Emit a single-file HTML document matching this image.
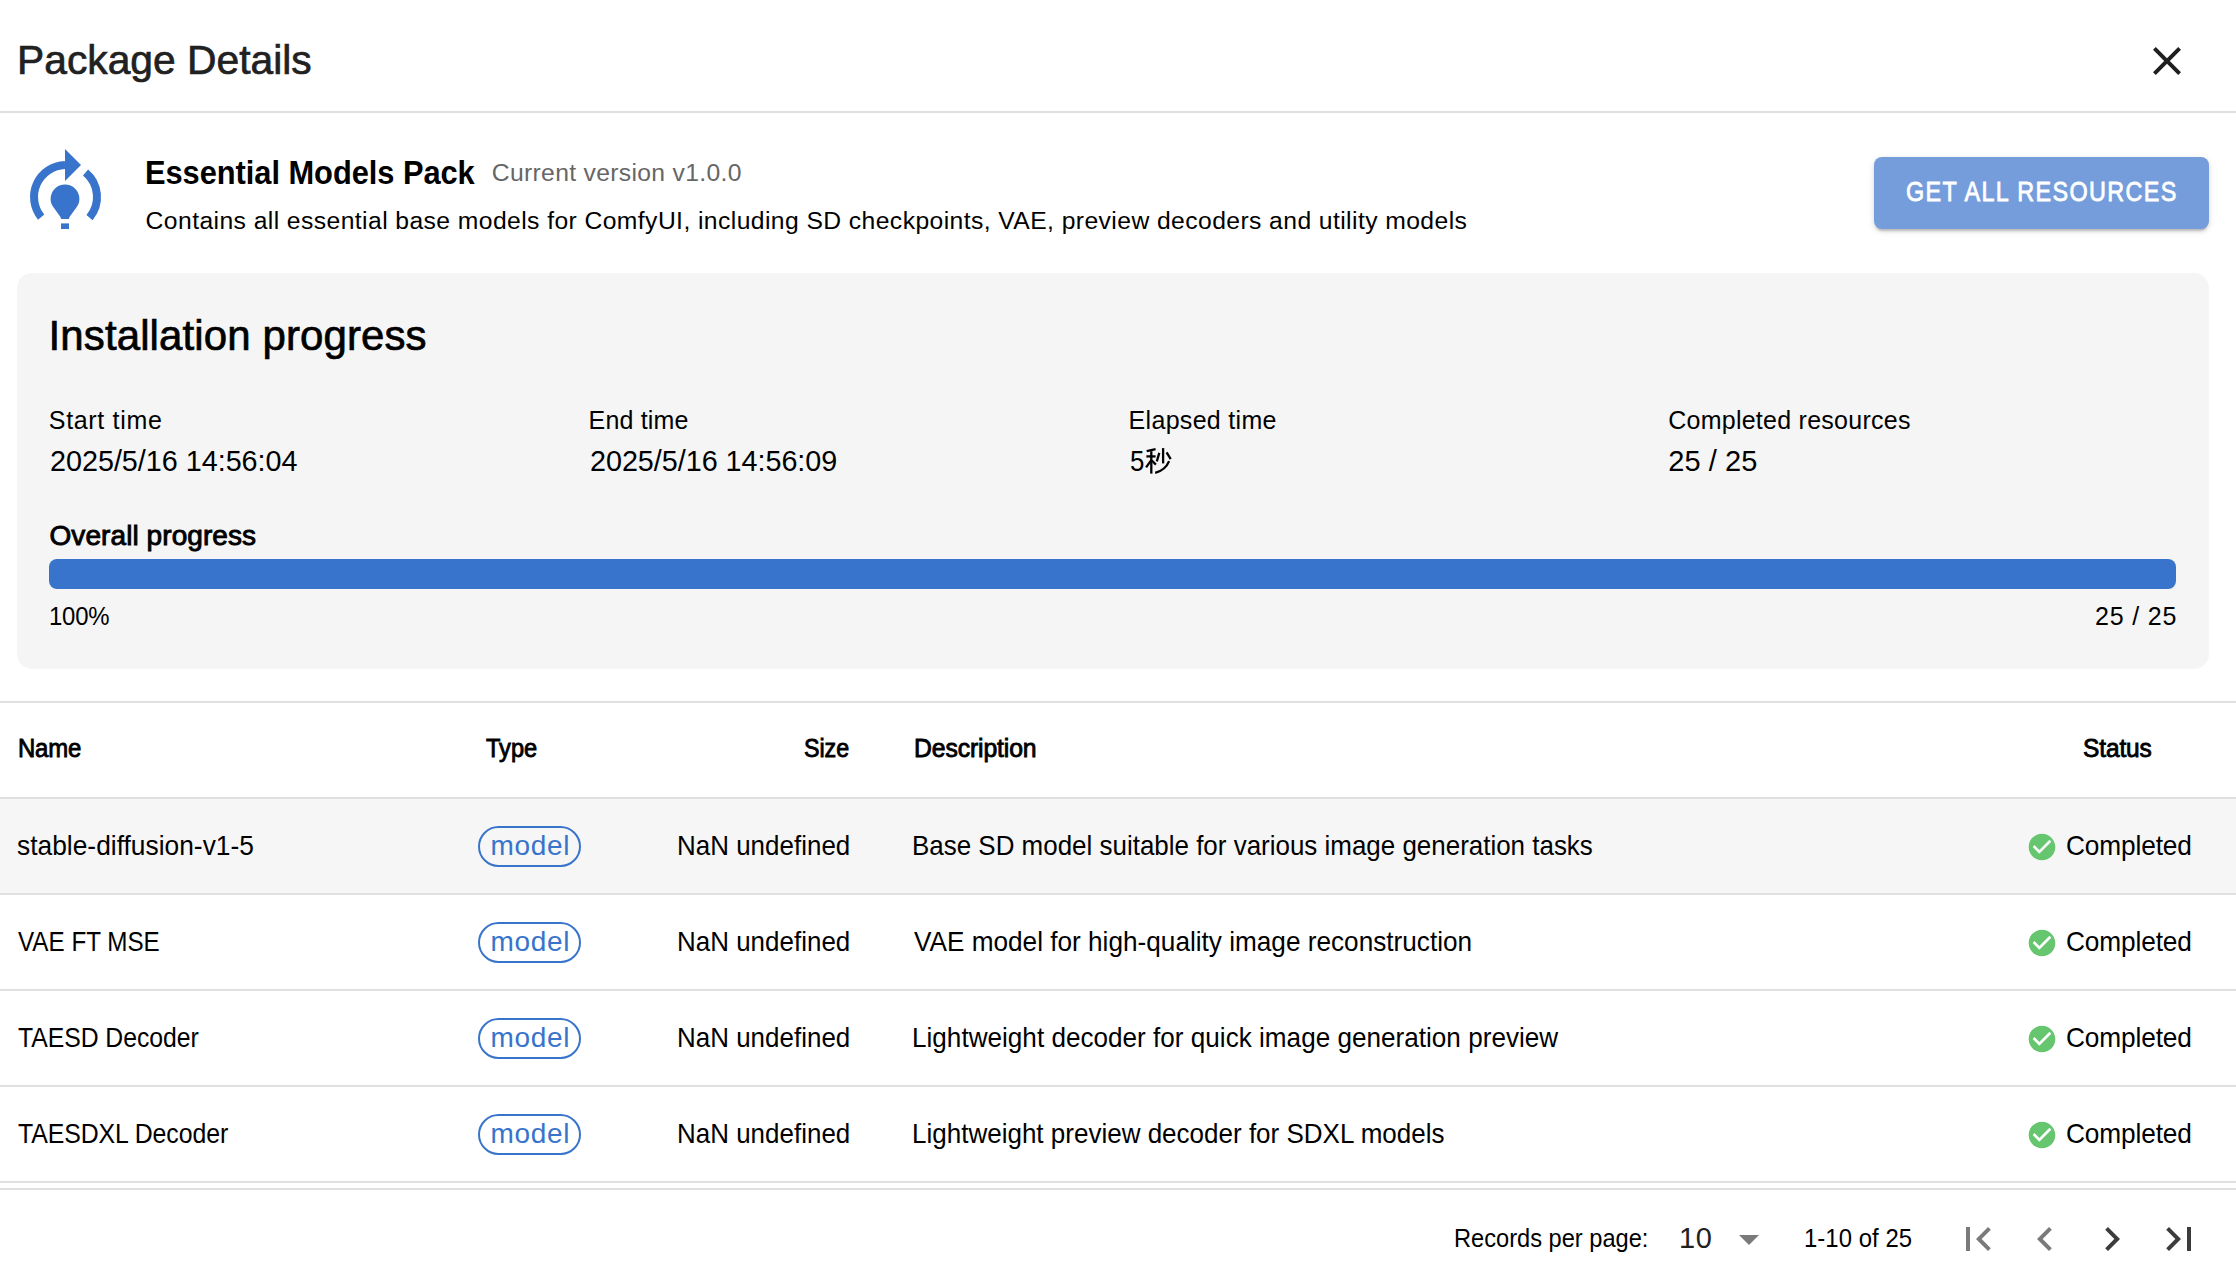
<!DOCTYPE html>
<html><head><meta charset="utf-8"><title>Package Details</title>
<style>
html,body{margin:0;padding:0;background:#fff;width:2236px;height:1270px;overflow:hidden;}
body{position:relative;font-family:"Liberation Sans",sans-serif;}
.t{position:absolute;white-space:nowrap;}
.ic{position:absolute;display:block;}
.hl{position:absolute;left:0;width:2236px;height:2px;background:#e0e0e0;}
.hov{position:absolute;left:0;width:2236px;background:#f6f6f6;}
.card{position:absolute;background:#f5f5f5;border-radius:15px;}
.bar{position:absolute;background:#3874cb;border-radius:8px;}
.btn{position:absolute;background:#759ddb;border-radius:8px;box-shadow:0 4px 2px -2px rgba(0,0,0,.16),0 2px 4px 0 rgba(0,0,0,.1),0 2px 8px 0 rgba(0,0,0,.08);}
.chip{position:absolute;box-sizing:border-box;border:2px solid #3874cb;border-radius:22px;}
</style></head><body>
<svg class="ic" style="left:2142.6px;top:36.8px;width:48px;height:48px" viewBox="0 0 24 24"><path fill="#1f1f1f" d="M19,6.41L17.59,5L12,10.59L6.41,5L5,6.41L10.59,12L5,17.59L6.41,19L12,13.41L17.59,19L19,17.59L13.41,12L19,6.41Z"/></svg>
<div class="hl" style="top:111px"></div>
<svg class="ic" style="left:17.3px;top:148.7px;width:96px;height:96px" viewBox="0 0 24 24">
<g fill="none" stroke="#3874cb" stroke-width="2">
<path d="M6.04,17.03 A8,8 0 0 1 12,4"/>
<path d="M17.14,5.87 A8,8 0 0 1 18.13,17.14"/>
</g>
<g fill="#3874cb">
<path d="M12,0 L16,4 L12,8 Z"/>
<path d="M8.4,12.5 A3.6,3.6 0 0 1 15.6,12.5 C15.6,13.4 15.3,14 14.8,14.7 L13.4,16.6 C13.1,17 13,17.2 13,17.5 L11,17.5 C11,17.2 10.9,17 10.6,16.6 L9.2,14.7 C8.7,14 8.4,13.4 8.4,12.5 Z"/>
<rect x="11" y="18.6" width="2" height="1.4"/>
</g></svg>
<div class="btn" style="left:1874px;top:157px;width:335px;height:72px"></div>
<div class="card" style="left:17px;top:273px;width:2192px;height:396px"></div>
<div class="bar" style="left:49px;top:559px;width:2127px;height:30px"></div>
<div class="hl" style="top:701px"></div>
<div class="hl" style="top:797px"></div>
<div class="hov" style="top:799px;height:94px"></div>
<div class="chip" style="left:478px;top:825.6px;width:103.4px;height:41.3px"></div>
<svg class="ic" style="left:2026.3px;top:830.5px;width:32px;height:32px" viewBox="0 0 24 24"><path fill="#66c66f" d="M12 2C6.5 2 2 6.5 2 12S6.5 22 12 22 22 17.5 22 12 17.5 2 12 2M10 17L5 12L6.41 10.59L10 14.17L17.59 6.58L19 8L10 17Z"/></svg>
<div class="hl" style="top:893px"></div>
<div class="chip" style="left:478px;top:921.6px;width:103.4px;height:41.3px"></div>
<svg class="ic" style="left:2026.3px;top:926.5px;width:32px;height:32px" viewBox="0 0 24 24"><path fill="#66c66f" d="M12 2C6.5 2 2 6.5 2 12S6.5 22 12 22 22 17.5 22 12 17.5 2 12 2M10 17L5 12L6.41 10.59L10 14.17L17.59 6.58L19 8L10 17Z"/></svg>
<div class="hl" style="top:989px"></div>
<div class="chip" style="left:478px;top:1017.6px;width:103.4px;height:41.3px"></div>
<svg class="ic" style="left:2026.3px;top:1022.5px;width:32px;height:32px" viewBox="0 0 24 24"><path fill="#66c66f" d="M12 2C6.5 2 2 6.5 2 12S6.5 22 12 22 22 17.5 22 12 17.5 2 12 2M10 17L5 12L6.41 10.59L10 14.17L17.59 6.58L19 8L10 17Z"/></svg>
<div class="hl" style="top:1085px"></div>
<div class="chip" style="left:478px;top:1113.6px;width:103.4px;height:41.3px"></div>
<svg class="ic" style="left:2026.3px;top:1118.5px;width:32px;height:32px" viewBox="0 0 24 24"><path fill="#66c66f" d="M12 2C6.5 2 2 6.5 2 12S6.5 22 12 22 22 17.5 22 12 17.5 2 12 2M10 17L5 12L6.41 10.59L10 14.17L17.59 6.58L19 8L10 17Z"/></svg>
<div class="hl" style="top:1181px"></div>
<div class="hl" style="top:1188px"></div>
<svg class="ic" style="left:1724.5px;top:1214.7px;width:48px;height:48px" viewBox="0 0 24 24"><path fill="#7a7a7a" d="M7,10L12,15L17,10H7Z"/></svg>
<svg class="ic" style="left:1953.6px;top:1215px;width:48px;height:48px" viewBox="0 0 24 24"><path fill="#7a7a7a" d="M18.41,16.59L13.82,12L18.41,7.41L17,6L11,12L17,18L18.41,16.59M6,6H8V18H6V6Z"/></svg>
<svg class="ic" style="left:2021.3px;top:1215px;width:48px;height:48px" viewBox="0 0 24 24"><path fill="#7a7a7a" d="M15.41,16.58L10.83,12L15.41,7.41L14,6L8,12L14,18L15.41,16.58Z"/></svg>
<svg class="ic" style="left:2087.6px;top:1215px;width:48px;height:48px" viewBox="0 0 24 24"><path fill="#3c3c3c" d="M8.59,16.58L13.17,12L8.59,7.41L10,6L16,12L10,18L8.59,16.58Z"/></svg>
<svg class="ic" style="left:2154.5px;top:1215px;width:48px;height:48px" viewBox="0 0 24 24"><path fill="#3c3c3c" d="M5.59,7.41L10.18,12L5.59,16.59L7,18L13,12L7,6L5.59,7.41M16,6H18V18H16V6Z"/></svg>
<svg class="ic" style="left:1140px;top:440px;width:40px;height:40px" viewBox="1140 440 40 40"><g fill="none" stroke="#000" stroke-width="2.3"><path d="M1146.7,451.1 L1155.6,449.2"/><path d="M1146.4,456.4 H1155.6"/><path d="M1151.3,451.2 V473.6"/><path d="M1151.3,460.2 L1146.1,467.4"/><path d="M1151.8,460.5 L1155.9,464.6"/><path d="M1159.3,452.9 L1156.8,461.4"/><path d="M1163.1,448.1 V463.4"/><path d="M1166.6,452.3 L1170.7,459.2"/><path d="M1169.1,461.1 Q1165.5,470 1155.2,472.9"/></g></svg>
<div class="t" id="title" style="left:16.60px;top:38.52px;font-size:41.5px;line-height:41.5px;color:#212121;letter-spacing:0.014px;-webkit-text-stroke:0.7px;transform:scaleX(0.9821);transform-origin:0 0;">Package Details</div>
<div class="t" id="pname" style="left:145.20px;top:156.15px;font-size:33px;line-height:33px;color:#000;font-weight:700;letter-spacing:-0.040px;transform:scaleX(0.9336);transform-origin:0 0;">Essential Models Pack</div>
<div class="t" id="pver" style="left:491.80px;top:161.10px;font-size:24.7px;line-height:24.7px;color:#666;letter-spacing:0.324px;">Current version v1.0.0</div>
<div class="t" id="pdesc" style="left:145.60px;top:209.20px;font-size:24.7px;line-height:24.7px;color:#000;letter-spacing:0.416px;">Contains all essential base models for ComfyUI, including SD checkpoints, VAE, preview decoders and utility models</div>
<div class="t" id="btn" style="left:1905.80px;top:176.88px;font-size:28.5px;line-height:28.5px;color:#fff;letter-spacing:1.700px;-webkit-text-stroke:0.8px;transform:scaleX(0.8200);transform-origin:0 0;">GET ALL RESOURCES</div>
<div class="t" id="inst" style="left:48.60px;top:314.60px;font-size:42px;line-height:42px;color:#000;letter-spacing:0.105px;-webkit-text-stroke:0.7px;">Installation progress</div>
<div class="t" id="lab0" style="left:48.80px;top:407.55px;font-size:25px;line-height:25px;color:#000;letter-spacing:0.678px;">Start time</div>
<div class="t" id="val0" style="left:49.60px;top:447.15px;font-size:29px;line-height:29px;color:#000;letter-spacing:-0.012px;transform:scaleX(0.9911);transform-origin:0 0;">2025/5/16 14:56:04</div>
<div class="t" id="lab1" style="left:588.60px;top:407.55px;font-size:25px;line-height:25px;color:#000;letter-spacing:0.157px;">End time</div>
<div class="t" id="val1" style="left:589.60px;top:447.15px;font-size:29px;line-height:29px;color:#000;letter-spacing:-0.035px;transform:scaleX(0.9915);transform-origin:0 0;">2025/5/16 14:56:09</div>
<div class="t" id="lab2" style="left:1128.60px;top:407.55px;font-size:25px;line-height:25px;color:#000;letter-spacing:0.300px;">Elapsed time</div>
<div class="t" id="val2" style="left:1130.40px;top:447.15px;font-size:29px;line-height:29px;color:#000;letter-spacing:-1.000px;transform:scaleX(0.8929);transform-origin:0 0;">5</div>
<div class="t" id="lab3" style="left:1668.20px;top:407.55px;font-size:25px;line-height:25px;color:#000;letter-spacing:0.256px;">Completed resources</div>
<div class="t" id="val3" style="left:1668.20px;top:447.15px;font-size:29px;line-height:29px;color:#000;letter-spacing:0.067px;">25 / 25</div>
<div class="t" id="overall" style="left:49.50px;top:522.30px;font-size:28px;line-height:28px;color:#000;letter-spacing:0.080px;-webkit-text-stroke:0.9px;">Overall progress</div>
<div class="t" id="pct" style="left:48.60px;top:603.75px;font-size:25px;line-height:25px;color:#000;letter-spacing:-0.200px;transform:scaleX(0.9574);transform-origin:0 0;">100%</div>
<div class="t" id="cnt" style="left:2095.00px;top:603.55px;font-size:25px;line-height:25px;color:#000;letter-spacing:0.817px;">25 / 25</div>
<div class="t" id="hName" style="left:17.50px;top:735.75px;font-size:25px;line-height:25px;color:#000;letter-spacing:-0.200px;-webkit-text-stroke:0.85px;transform:scaleX(0.9569);transform-origin:0 0;">Name</div>
<div class="t" id="hType" style="left:486.00px;top:735.75px;font-size:25px;line-height:25px;color:#000;-webkit-text-stroke:0.85px;transform:scaleX(0.9444);transform-origin:0 0;">Type</div>
<div class="t" id="hSize" style="left:804.20px;top:735.75px;font-size:25px;line-height:25px;color:#000;letter-spacing:-0.033px;-webkit-text-stroke:0.85px;transform:scaleX(0.9298);transform-origin:0 0;">Size</div>
<div class="t" id="hDesc" style="left:913.70px;top:735.75px;font-size:25px;line-height:25px;color:#000;letter-spacing:-0.110px;-webkit-text-stroke:0.85px;transform:scaleX(0.9893);transform-origin:0 0;">Description</div>
<div class="t" id="hStatus" style="left:2083.00px;top:735.75px;font-size:25px;line-height:25px;color:#000;letter-spacing:-0.100px;-webkit-text-stroke:0.85px;transform:scaleX(0.9783);transform-origin:0 0;">Status</div>
<div class="t" id="n0" style="left:16.80px;top:832.40px;font-size:28px;line-height:28px;color:#000;letter-spacing:0.010px;transform:scaleX(0.9408);transform-origin:0 0;">stable-diffusion-v1-5</div>
<div class="t" id="m0" style="left:490.60px;top:832.40px;font-size:28px;line-height:28px;color:#3874cb;letter-spacing:0.625px;">model</div>
<div class="t" id="s0" style="left:677.00px;top:832.40px;font-size:28px;line-height:28px;color:#000;letter-spacing:0.033px;transform:scaleX(0.9257);transform-origin:0 0;">NaN undefined</div>
<div class="t" id="d0" style="left:912.00px;top:832.40px;font-size:28px;line-height:28px;color:#000;letter-spacing:0.004px;transform:scaleX(0.9265);transform-origin:0 0;">Base SD model suitable for various image generation tasks</div>
<div class="t" id="c0" style="left:2066.40px;top:832.40px;font-size:28px;line-height:28px;color:#000;letter-spacing:-0.150px;transform:scaleX(0.9379);transform-origin:0 0;">Completed</div>
<div class="t" id="n1" style="left:17.80px;top:928.40px;font-size:28px;line-height:28px;color:#000;transform:scaleX(0.8650);transform-origin:0 0;">VAE FT MSE</div>
<div class="t" id="m1" style="left:490.60px;top:928.40px;font-size:28px;line-height:28px;color:#3874cb;letter-spacing:0.625px;">model</div>
<div class="t" id="s1" style="left:677.00px;top:928.40px;font-size:28px;line-height:28px;color:#000;letter-spacing:0.033px;transform:scaleX(0.9257);transform-origin:0 0;">NaN undefined</div>
<div class="t" id="d1" style="left:914.00px;top:928.40px;font-size:28px;line-height:28px;color:#000;letter-spacing:-0.004px;transform:scaleX(0.9350);transform-origin:0 0;">VAE model for high-quality image reconstruction</div>
<div class="t" id="c1" style="left:2066.40px;top:928.40px;font-size:28px;line-height:28px;color:#000;letter-spacing:-0.150px;transform:scaleX(0.9379);transform-origin:0 0;">Completed</div>
<div class="t" id="n2" style="left:17.80px;top:1024.40px;font-size:28px;line-height:28px;color:#000;letter-spacing:-0.050px;transform:scaleX(0.8843);transform-origin:0 0;">TAESD Decoder</div>
<div class="t" id="m2" style="left:490.60px;top:1024.40px;font-size:28px;line-height:28px;color:#3874cb;letter-spacing:0.625px;">model</div>
<div class="t" id="s2" style="left:677.00px;top:1024.40px;font-size:28px;line-height:28px;color:#000;letter-spacing:0.033px;transform:scaleX(0.9257);transform-origin:0 0;">NaN undefined</div>
<div class="t" id="d2" style="left:912.00px;top:1024.40px;font-size:28px;line-height:28px;color:#000;letter-spacing:0.011px;transform:scaleX(0.9321);transform-origin:0 0;">Lightweight decoder for quick image generation preview</div>
<div class="t" id="c2" style="left:2066.40px;top:1024.40px;font-size:28px;line-height:28px;color:#000;letter-spacing:-0.150px;transform:scaleX(0.9379);transform-origin:0 0;">Completed</div>
<div class="t" id="n3" style="left:17.80px;top:1120.40px;font-size:28px;line-height:28px;color:#000;letter-spacing:-0.086px;transform:scaleX(0.8873);transform-origin:0 0;">TAESDXL Decoder</div>
<div class="t" id="m3" style="left:490.60px;top:1120.40px;font-size:28px;line-height:28px;color:#3874cb;letter-spacing:0.625px;">model</div>
<div class="t" id="s3" style="left:677.00px;top:1120.40px;font-size:28px;line-height:28px;color:#000;letter-spacing:0.033px;transform:scaleX(0.9257);transform-origin:0 0;">NaN undefined</div>
<div class="t" id="d3" style="left:912.00px;top:1120.40px;font-size:28px;line-height:28px;color:#000;transform:scaleX(0.9289);transform-origin:0 0;">Lightweight preview decoder for SDXL models</div>
<div class="t" id="c3" style="left:2066.40px;top:1120.40px;font-size:28px;line-height:28px;color:#000;letter-spacing:-0.150px;transform:scaleX(0.9379);transform-origin:0 0;">Completed</div>
<div class="t" id="rpp" style="left:1454.40px;top:1226.15px;font-size:25px;line-height:25px;color:#000;transform:scaleX(0.9453);transform-origin:0 0;">Records per page:</div>
<div class="t" id="ten" style="left:1679.00px;top:1224.45px;font-size:29px;line-height:29px;color:#212121;letter-spacing:0.700px;">10</div>
<div class="t" id="range" style="left:1803.80px;top:1226.15px;font-size:25px;line-height:25px;color:#000;letter-spacing:0.067px;transform:scaleX(0.9555);transform-origin:0 0;">1-10 of 25</div>
</body></html>
